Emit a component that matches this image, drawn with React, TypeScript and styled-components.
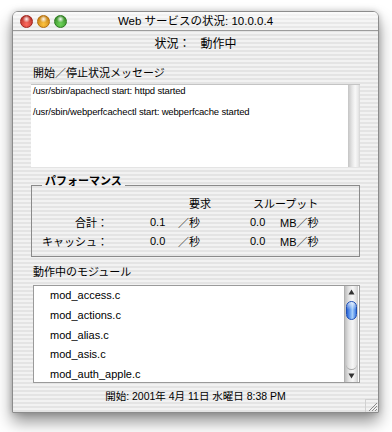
import React from "react";
import styled, { createGlobalStyle } from "styled-components";

const GlobalStyle = createGlobalStyle`
  html, body {
    margin: 0;
    padding: 0;
    background: #ffffff;
  }
  body {
    font-family: "Liberation Sans", "Noto Sans CJK JP", sans-serif;
    color: #000;
  }
`;

const pinstripe = `repeating-linear-gradient(to bottom, #f2f2f2 0px, #f2f2f2 2px, #e4e4e4 2px, #e4e4e4 4px)`;

const Page = styled.div`
  padding: 11px 0 0 12px;
  height: 432px;
  box-sizing: border-box;
`;

const Window = styled.div`
  width: 367px;
  height: 402px;
  box-sizing: border-box;
  border: 1px solid #8c8c8c;
  border-radius: 6px 6px 0 0;
  background: ${pinstripe};
  box-shadow: 0 9px 16px rgba(0, 0, 0, 0.42), 0 0 6px rgba(0, 0, 0, 0.2);
  display: flex;
  flex-direction: column;
  overflow: hidden;
`;

const TitleBar = styled.div`
  height: 18px;
  flex-shrink: 0;
  display: grid;
  grid-template-columns: 1fr auto 1fr;
  align-items: center;
  border-bottom: 1px solid #9c9c9c;
  background:
    linear-gradient(to bottom, rgba(255, 255, 255, 0.6), rgba(255, 255, 255, 0) 60%),
    repeating-linear-gradient(to bottom, #f4f4f4 0px, #f4f4f4 2px, #e8e8e8 2px, #e8e8e8 4px);
`;

const Lights = styled.div`
  display: flex;
  gap: 4px;
  padding-left: 7px;
`;

const Light = styled.div<{ $color: string; $dark: string }>`
  width: 13px;
  height: 13px;
  border-radius: 50%;
  box-sizing: border-box;
  border: 1px solid ${(p) => p.$dark};
  background:
    radial-gradient(circle at 50% 28%, rgba(255, 255, 255, 0.95) 0, rgba(255, 255, 255, 0) 38%),
    radial-gradient(circle at 50% 75%, ${(p) => p.$color} 0, ${(p) => p.$dark} 100%);
`;

const Title = styled.div`
  font-size: 11.5px;
  line-height: 16px;
  white-space: nowrap;
`;

const Body = styled.div`
  padding: 0 18px;
  display: flex;
  flex-direction: column;
`;

const Status = styled.div`
  margin-top: 5px;
  font-size: 12px;
  line-height: 16px;
  text-align: center;
  display: flex;
  justify-content: center;
  gap: 10px;
`;

const Label = styled.div<{ $gap: number }>`
  margin-top: ${(p) => p.$gap}px;
  font-size: 11px;
  line-height: 14px;
  margin-left: 2px;
`;

const MessageBox = styled.div`
  margin-top: 4px;
  height: 83px;
  display: flex;
  background: #fff;
  border-top: 1px solid #c4c4c4;
  box-sizing: border-box;
`;

const MessageText = styled.div`
  flex: 1;
  padding: 1px 2px;
  font-size: 9.5px;
  line-height: 10.5px;
  letter-spacing: -0.15px;
  white-space: pre;
`;

const EmptyTrack = styled.div`
  width: 12px;
  background: linear-gradient(to right, #c4c4c4, #e6e6e6 35%, #f8f8f8 60%, #e8e8e8 85%, #d4d4d4);
`;

const Group = styled.fieldset`
  margin: 7px 0 0 0;
  padding: 0;
  border: 1px solid #8a8a8a;
  height: 83px;
  box-sizing: border-box;
`;

const Legend = styled.legend`
  margin-left: 10px;
  padding: 0 3px 8px 3px;
  font-size: 11px;
  line-height: 14px;
  font-weight: bold;
`;

const PerfGrid = styled.div`
  margin-top: -3px;
  display: grid;
  grid-template-columns: 76px 42px 28px 72px 30px 1fr;
  grid-auto-rows: 19px;
  font-size: 11px;
  align-items: center;
`;

const Cell = styled.div<{ $col: number; $span?: number; $align?: string }>`
  grid-column: ${(p) => p.$col} / span ${(p) => p.$span ?? 1};
  text-align: ${(p) => p.$align ?? "left"};
  white-space: nowrap;
`;

const ModuleBox = styled.div`
  margin: 6px 0 0 2px;
  height: 98px;
  box-sizing: border-box;
  border: 1px solid #9a9a9a;
  background: #fff;
  display: flex;
`;

const ModuleList = styled.div`
  flex: 1;
`;

const ModuleRow = styled.div`
  height: 19.75px;
  line-height: 19.75px;
  padding-left: 16px;
  font-size: 11px;
`;

const ScrollBar = styled.div`
  width: 13px;
  margin-right: 1px;
  display: flex;
  flex-direction: column;
  align-items: center;
  background: linear-gradient(to right, #bfbfbf, #e4e4e4 30%, #f7f7f7 60%, #e2e2e2 85%, #c8c8c8);
  border-left: 1px solid #b0b0b0;
`;

const Arrow = styled.div`
  height: 12px;
  width: 100%;
  display: flex;
  align-items: center;
  justify-content: center;
`;

const Thumb = styled.div`
  margin-top: 3px;
  width: 11px;
  height: 19px;
  box-sizing: border-box;
  border-radius: 6px;
  border: 1px solid #1d4fb5;
  background:
    linear-gradient(to bottom, rgba(255, 255, 255, 0.7), rgba(255, 255, 255, 0) 45%),
    linear-gradient(to right, #2a63d6, #7fb3f4 45%, #a8d0fb 60%, #3a78e0);
`;

const TrackEnd = styled.div`
  margin-top: auto;
  width: 11px;
  height: 8px;
  border-radius: 0 0 6px 6px;
  border-bottom: 1px solid #a8a8a8;
  box-sizing: border-box;
`;

const Footer = styled.div`
  margin-top: auto;
  height: 22px;
  display: grid;
  grid-template-columns: 1fr auto 1fr;
  align-items: start;
`;

const FooterText = styled.div`
  font-size: 10.5px;
  line-height: 14px;
  margin-top: -1px;
  white-space: nowrap;
`;

const Grip = styled.div`
  justify-self: end;
  align-self: end;
  width: 13px;
  height: 13px;
  border-left: 1px solid #d0d0d0;
  border-top: 1px solid #d0d0d0;
  box-sizing: border-box;
  display: flex;
`;

const modules = [
  "mod_access.c",
  "mod_actions.c",
  "mod_alias.c",
  "mod_asis.c",
  "mod_auth_apple.c",
];

const perfRows = [
  { label: "合計：", req: "0.1", thr: "0.0" },
  { label: "キャッシュ：", req: "0.0", thr: "0.0" },
];

function UpArrow() {
  return (
    <svg width="7" height="6" viewBox="0 0 7 6">
      <path d="M3.5 0.5 L6.5 5.5 L0.5 5.5 Z" fill="#333" />
    </svg>
  );
}

function DownArrow() {
  return (
    <svg width="7" height="6" viewBox="0 0 7 6">
      <path d="M0.5 0.5 L6.5 0.5 L3.5 5.5 Z" fill="#333" />
    </svg>
  );
}

export default function App() {
  return (
    <>
      <GlobalStyle />
      <Page>
        <Window>
          <TitleBar>
            <Lights>
              <Light $color="#ff6a5e" $dark="#a3221b" />
              <Light $color="#ffc43d" $dark="#b46e0b" />
              <Light $color="#6ed65a" $dark="#2c7a1e" />
            </Lights>
            <Title>Web サービスの状況: 10.0.0.4</Title>
          </TitleBar>

          <Body>
            <Status>
              <span>状況：</span>
              <span>動作中</span>
            </Status>

            <Label $gap={14}>開始／停止状況メッセージ</Label>
            <MessageBox>
              <MessageText>
                {"/usr/sbin/apachectl start: httpd started\n\n/usr/sbin/webperfcachectl start: webperfcache started"}
              </MessageText>
              <EmptyTrack />
            </MessageBox>

            <Group>
              <Legend>パフォーマンス</Legend>
              <PerfGrid>
                <Cell $col={3} $span={2} $align="center">要求</Cell>
                <Cell $col={5} $span={2} $align="left" style={{ paddingLeft: 3 }}>スループット</Cell>
                {perfRows.map((r) => (
                  <React.Fragment key={r.label}>
                    <Cell $col={1} $align="right">{r.label}</Cell>
                    <Cell $col={3}>{r.req}</Cell>
                    <Cell $col={4}>／秒</Cell>
                    <Cell $col={5}>{r.thr}</Cell>
                    <Cell $col={6}>MB／秒</Cell>
                  </React.Fragment>
                ))}
              </PerfGrid>
            </Group>

            <Label $gap={8}>動作中のモジュール</Label>
            <ModuleBox>
              <ModuleList>
                {modules.map((m) => (
                  <ModuleRow key={m}>{m}</ModuleRow>
                ))}
              </ModuleList>
              <ScrollBar>
                <Arrow>
                  <UpArrow />
                </Arrow>
                <Thumb />
                <TrackEnd />
                <Arrow>
                  <DownArrow />
                </Arrow>
              </ScrollBar>
            </ModuleBox>
          </Body>

          <Footer>
            <div />
            <FooterText>開始: 2001年 4月 11日 水曜日 8:38 PM</FooterText>
            <Grip>
              <svg width="12" height="12" viewBox="0 0 12 12">
                <path d="M3 11 L11 3 M6 11 L11 6 M9 11 L11 9" stroke="#8a8a8a" strokeWidth="1" />
              </svg>
            </Grip>
          </Footer>
        </Window>
      </Page>
    </>
  );
}
